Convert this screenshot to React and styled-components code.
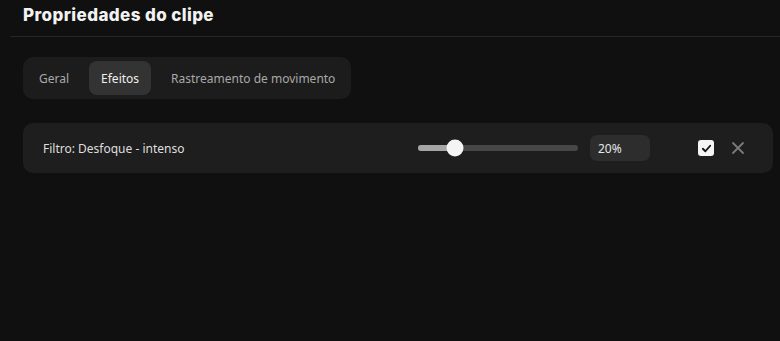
import React, { useState } from "react";
import styled, { createGlobalStyle } from "styled-components";

const Global = createGlobalStyle`
  html, body { margin: 0; padding: 0; background: #101010; }
  body { font-family: "Noto Sans", "Open Sans", sans-serif; color: #e6e6e6; }
  * { box-sizing: border-box; }
`;

const Page = styled.div`
  width: 780px;
  height: 341px;
  background: #101010;
  overflow: hidden;
`;

const Header = styled.div`
  margin-left: 10px;
  padding: 3px 0 0 13px;
  height: 37px;
  border-bottom: 1px solid #262626;
`;

const Title = styled.h1`
  margin: 0;
  font-family: "Inter", "Lato", sans-serif;
  font-weight: 800;
  font-size: 17px;
  letter-spacing: 0.4px;
  line-height: 24px;
  color: #f2f2f2;
`;

const Body = styled.div`
  padding: 20px 7px 0 23px;
  display: flex;
  flex-direction: column;
  gap: 24px;
`;

const TabBar = styled.div`
  align-self: flex-start;
  display: flex;
  gap: 8px;
  padding: 4px;
  background: #1c1c1c;
  border-radius: 10px;
`;

const Tab = styled.button`
  border: none;
  height: 34px;
  padding: 0 12px;
  border-radius: 8px;
  font-family: "Noto Sans", sans-serif;
  font-size: 12px;
  color: ${(p) => (p.$active ? "#f0f0f0" : "#a8a8a8")};
  background: ${(p) => (p.$active ? "#333333" : "transparent")};
  cursor: pointer;
`;

const Card = styled.div`
  width: 750px;
  height: 50px;
  background: #1e1e1e;
  border-radius: 10px;
  display: flex;
  align-items: center;
  padding: 0 27px 0 20px;
`;

const Label = styled.span`
  font-size: 12px;
  color: #dedede;
  flex: 1;
`;

const Slider = styled.div`
  position: relative;
  width: 160px;
  height: 6px;
  border-radius: 3px;
  background: #474747;
`;

const Fill = styled.div`
  height: 100%;
  border-radius: 3px;
  background: #a6a6a6;
`;

const Thumb = styled.div`
  position: absolute;
  top: 50%;
  width: 17px;
  height: 17px;
  border-radius: 50%;
  background: #f4f4f4;
  transform: translate(-50%, -50%);
`;

const ValueBox = styled.div`
  margin-left: 12px;
  width: 60px;
  height: 26px;
  border-radius: 7px;
  background: #2d2d2d;
  display: flex;
  align-items: center;
  padding-left: 8px;
  font-size: 12px;
  color: #e8e8e8;
`;

const Check = styled.div`
  margin-left: 48px;
  width: 16px;
  height: 16px;
  border-radius: 3px;
  background: #f5f5f5;
  display: flex;
  align-items: center;
  justify-content: center;
`;

const Close = styled.button`
  margin-left: 16px;
  width: 16px;
  height: 16px;
  padding: 0;
  border: none;
  background: transparent;
  display: flex;
  align-items: center;
  justify-content: center;
  cursor: pointer;
`;

export default function App() {
  const [tab, setTab] = useState("Efeitos");
  const value = 23;
  return (
    <Page>
      <Global />
      <Header>
        <Title>Propriedades do clipe</Title>
      </Header>
      <Body>
        <TabBar>
          {["Geral", "Efeitos", "Rastreamento de movimento"].map((t) => (
            <Tab key={t} $active={t === tab} onClick={() => setTab(t)}>
              {t}
            </Tab>
          ))}
        </TabBar>
        <Card>
          <Label>Filtro: Desfoque - intenso</Label>
          <Slider>
            <Fill style={{ width: `${value}%` }} />
            <Thumb style={{ left: `${value}%` }} />
          </Slider>
          <ValueBox>20%</ValueBox>
          <Check>
            <svg width="11" height="11" viewBox="0 0 12 12">
              <path d="M2 6.3 L4.8 9 L10 3" fill="none" stroke="#111" strokeWidth="2" strokeLinecap="round" strokeLinejoin="round" />
            </svg>
          </Check>
          <Close>
            <svg width="14" height="14" viewBox="0 0 14 14">
              <path d="M2 2 L12 12 M12 2 L2 12" stroke="#7a7a7a" strokeWidth="1.8" strokeLinecap="round" />
            </svg>
          </Close>
        </Card>
      </Body>
    </Page>
  );
}
